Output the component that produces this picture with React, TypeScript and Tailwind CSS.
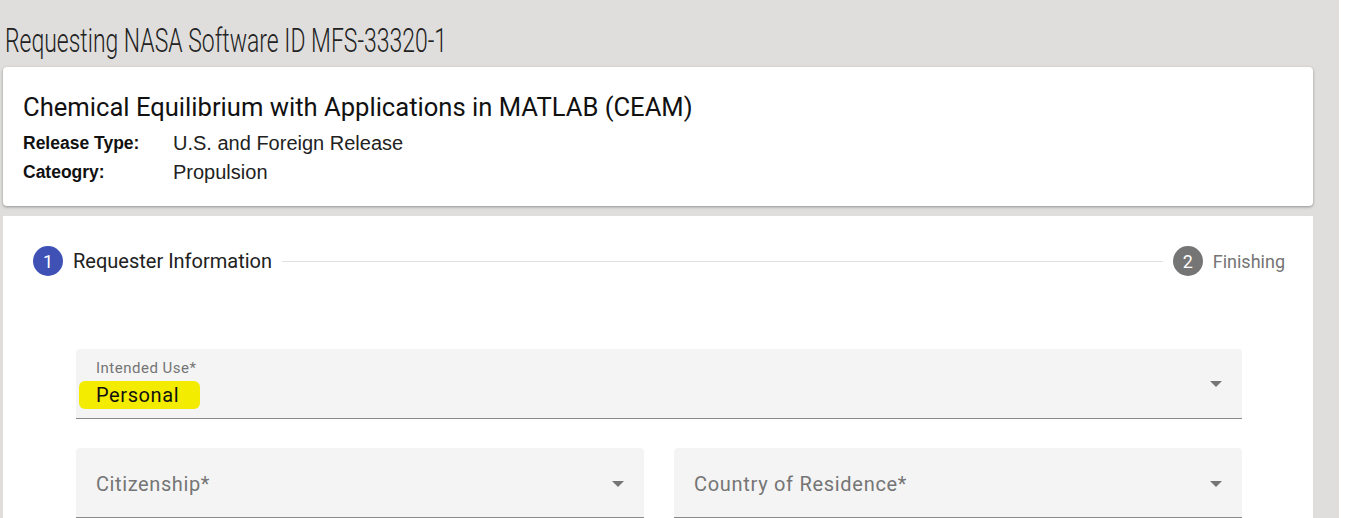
import React from "react";

const Arrow = () => (
  <svg width="12" height="6" viewBox="0 0 12 6" className="shrink-0">
    <path d="M0 0 L12 0 L6 6 Z" fill="#757575" />
  </svg>
);

export default function App() {
  return (
    <div className="w-[1347px] h-[518px] overflow-hidden bg-white">
      <div className="w-[1339px] h-[518px] bg-[#dfdedd] pl-[3px] pr-[26px] flex flex-col">
        <div className="h-[67px] flex items-end pb-[7px] pl-[2px] overflow-visible">
          <span className="inline-block origin-left scale-x-[0.675] whitespace-nowrap text-[34px] leading-[40px] font-light text-[#222] [font-family:Roboto,sans-serif]">
            Requesting NASA Software ID MFS-33320-1
          </span>
        </div>
        <div className="bg-white rounded-[4px] shadow-[0_1px_3px_rgba(0,0,0,0.35)] h-[140px] px-[20px] pt-[24px] [font-family:Roboto,sans-serif]">
          <div className="text-[25.6px] leading-[32px] text-[#111]">
            Chemical Equilibrium with Applications in MATLAB (CEAM)
          </div>
          <div className="[font-family:'Liberation_Sans',Arial,sans-serif] mt-[6px]">
            <div className="flex items-center h-[29px]">
              <span className="w-[150px] text-[17.5px] font-bold text-[#111]">Release Type:</span>
              <span className="text-[20px] text-[#222]">U.S. and Foreign Release</span>
            </div>
            <div className="flex items-center h-[29px]">
              <span className="w-[150px] text-[17.5px] font-bold text-[#111]">Cateogry:</span>
              <span className="text-[20px] text-[#222]">Propulsion</span>
            </div>
          </div>
        </div>
        <div className="mt-[10px] bg-white flex-1 [font-family:Roboto,sans-serif]">
          <div className="flex items-center h-[90px] pl-[30px] pr-[28px]">
            <div className="w-[30px] h-[30px] rounded-full bg-[#3f51b5] text-white text-[18px] flex items-center justify-center">1</div>
            <span className="ml-[10px] text-[20px] text-[#212121]">Requester Information</span>
            <div className="flex-1 h-px bg-[#e0e0e0] mx-[10px]" />
            <div className="w-[30px] h-[30px] rounded-full bg-[#757575] text-white text-[18px] flex items-center justify-center">2</div>
            <span className="ml-[10px] text-[18px] text-[#757575]">Finishing</span>
          </div>
          <div className="pl-[73px] pr-[71px] pt-[43px] flex flex-col gap-[29px]">
            <div className="h-[70px] bg-[#f4f4f4] rounded-t-[4px] border-b border-[#8a8a8a] flex items-center pl-[20px] pr-[20px]">
              <div className="flex-1 flex flex-col">
                <span className="text-[15px] leading-[16px] tracking-[0.5px] text-[#757575] mt-[2px]">Intended Use*</span>
                <span className="mt-[5px] self-start inline-block -ml-[17px] pl-[17px] pr-[21px] bg-[#f4ec00] rounded-[6px] text-[20px] leading-[28px] tracking-[0.6px] text-[#111]">
                  Personal
                </span>
              </div>
              <Arrow />
            </div>
            <div className="flex gap-[30px]">
              <div className="flex-1 h-[70px] bg-[#f4f4f4] rounded-t-[4px] border-b border-[#8a8a8a] flex items-center pl-[20px] pr-[20px] pt-[2px]">
                <span className="flex-1 text-[20px] tracking-[0.6px] text-[#757575]">Citizenship*</span>
                <Arrow />
              </div>
              <div className="flex-1 h-[70px] bg-[#f4f4f4] rounded-t-[4px] border-b border-[#8a8a8a] flex items-center pl-[20px] pr-[20px] pt-[2px]">
                <span className="flex-1 text-[20px] tracking-[0.7px] text-[#757575]">Country of Residence*</span>
                <Arrow />
              </div>
            </div>
          </div>
        </div>
      </div>
    </div>
  );
}
